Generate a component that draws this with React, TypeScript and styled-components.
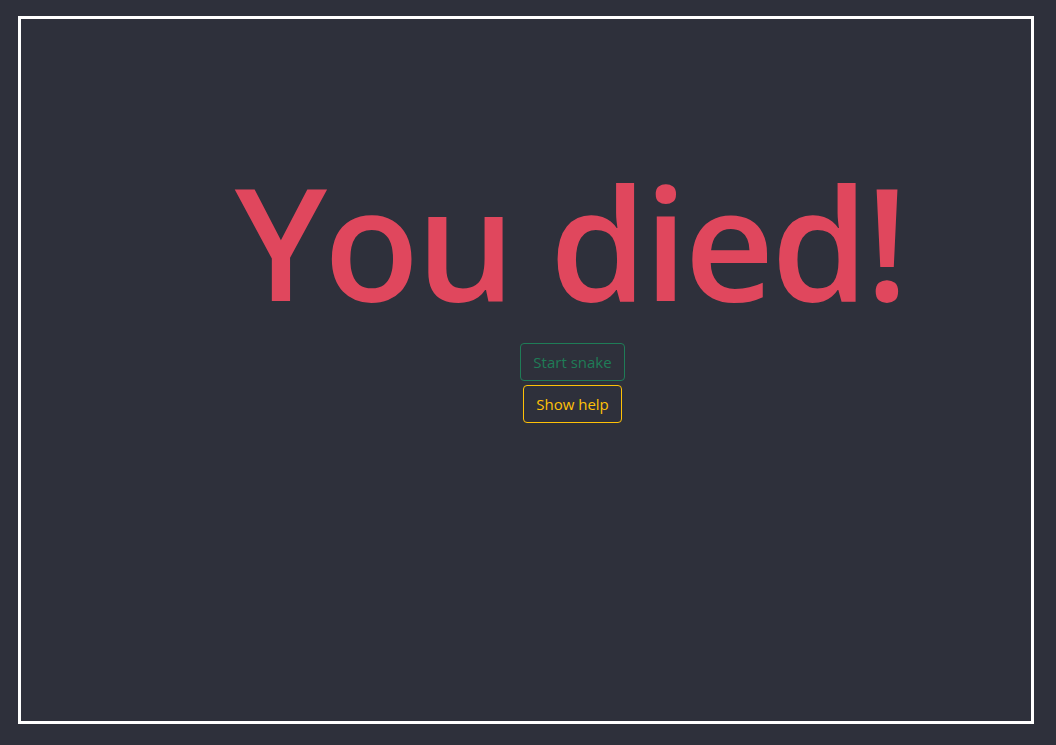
import styled, { createGlobalStyle } from "styled-components";

const GlobalStyle = createGlobalStyle`
  html, body {
    margin: 0;
    padding: 0;
    background: #2e303b;
    font-family: "Open Sans", "Noto Sans", sans-serif;
  }
`;

const Page = styled.div`
  height: 745px;
  box-sizing: border-box;
  padding: 16px 22px 21px 18px;
  display: flex;
`;

const Board = styled.div`
  flex: 1;
  border: 3px solid #ffffff;
  display: flex;
  flex-direction: column;
  align-items: center;
  padding: 128px 0 0 88px;
`;

const Title = styled.h1`
  margin: 0 0 9px;
  font-size: 156px;
  line-height: 1.2;
  font-weight: 600;
  letter-spacing: -3px;
  color: #e0475d;
  white-space: nowrap;
`;

const Actions = styled.div`
  display: flex;
  flex-direction: column;
  align-items: center;
  gap: 4px;
  margin-left: 5px;
`;

const Button = styled.button<{ $tone: string }>`
  font-family: "Open Sans", "Noto Sans", sans-serif;
  font-size: 15px;
  line-height: 24px;
  padding: 6px 12px;
  background: transparent;
  border: 1px solid ${(p) => p.$tone};
  border-radius: 4px;
  color: ${(p) => p.$tone};
  cursor: pointer;

  &:disabled {
    cursor: default;
  }
`;

export default function App() {
  return (
    <>
      <GlobalStyle />
      <Page>
        <Board>
          <Title>You died!</Title>
          <Actions>
            <Button $tone="#1f7c57" disabled>
              Start snake
            </Button>
            <Button $tone="#ffc107">Show help</Button>
          </Actions>
        </Board>
      </Page>
    </>
  );
}
